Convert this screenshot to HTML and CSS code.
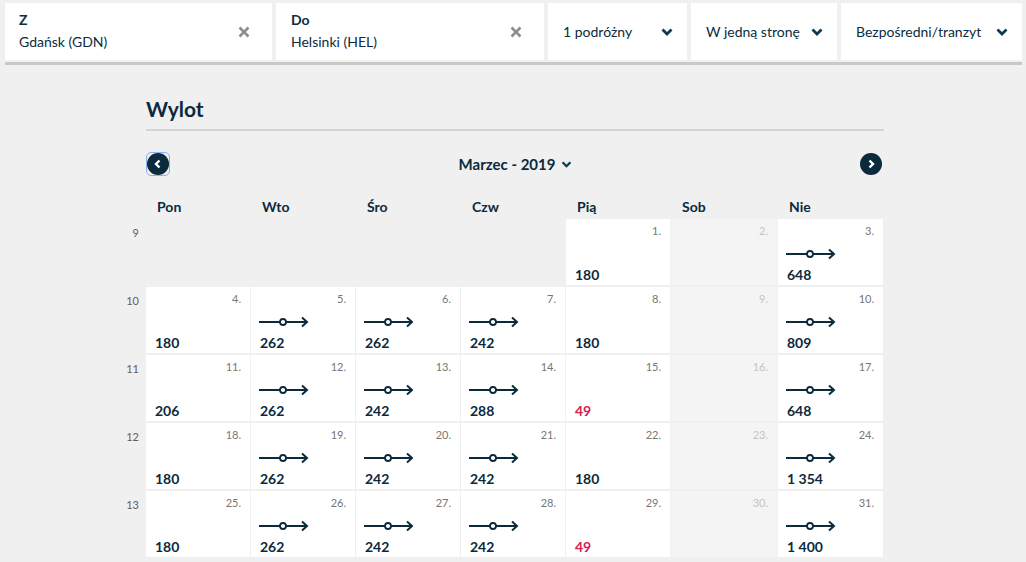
FILE: index.html
```html
<!DOCTYPE html>
<html lang="pl">
<head>
  <meta charset="UTF-8">
  <title>Wylot - kalendarz</title>
  <link rel="stylesheet" href="styles.css">
</head>
<body>
  <div class="search">
    <div class="field field-from">
      <div class="field-text">
        <div class="field-label">Z</div>
        <div class="field-value">Gdańsk (GDN)</div>
      </div>
      <svg class="clear" width="12" height="12" viewBox="0 0 12 12"><path d="M1.5 1.5 L10.5 10.5 M10.5 1.5 L1.5 10.5" stroke="#8e8e8e" stroke-width="2.6"/></svg>
    </div>
    <div class="field field-to">
      <div class="field-text">
        <div class="field-label">Do</div>
        <div class="field-value">Helsinki (HEL)</div>
      </div>
      <svg class="clear" width="12" height="12" viewBox="0 0 12 12"><path d="M1.5 1.5 L10.5 10.5 M10.5 1.5 L1.5 10.5" stroke="#8e8e8e" stroke-width="2.6"/></svg>
    </div>
    <div class="field field-pax">
      <span>1 podróżny</span>
      <svg class="chev" width="12" height="8" viewBox="0 0 12 8"><path d="M1.5 1.5 L6 6 L10.5 1.5" fill="none" stroke="#0b3a52" stroke-width="2.8"/></svg>
    </div>
    <div class="field field-trip">
      <span>W jedną stronę</span>
      <svg class="chev" width="12" height="8" viewBox="0 0 12 8"><path d="M1.5 1.5 L6 6 L10.5 1.5" fill="none" stroke="#0b3a52" stroke-width="2.8"/></svg>
    </div>
    <div class="field field-stops">
      <span>Bezpośredni/tranzyt</span>
      <svg class="chev" width="12" height="8" viewBox="0 0 12 8"><path d="M1.5 1.5 L6 6 L10.5 1.5" fill="none" stroke="#0b3a52" stroke-width="2.8"/></svg>
    </div>
  </div>

  <div class="calendar">
    <h2>Wylot</h2>
    <div class="nav">
      <button class="nav-btn focused"><svg width="22" height="22" viewBox="0 0 22 22"><circle cx="11" cy="11" r="11" fill="#0b2a3c"/><path d="M12.5 7.5 L9 11 L12.5 14.5" fill="none" stroke="#fff" stroke-width="2.4"/></svg></button>
      <div class="month-title">Marzec - 2019 <svg width="11" height="7" viewBox="0 0 12 8"><path d="M1.5 1.5 L6 6 L10.5 1.5" fill="none" stroke="#0b3a52" stroke-width="2.6"/></svg></div>
      <button class="nav-btn"><svg width="22" height="22" viewBox="0 0 22 22"><circle cx="11" cy="11" r="11" fill="#0b2a3c"/><path d="M9.5 7.5 L13 11 L9.5 14.5" fill="none" stroke="#fff" stroke-width="2.4"/></svg></button>
    </div>

    <div class="month">
      <div class="wk"></div>
      <div class="dow">Pon</div><div class="dow">Wto</div><div class="dow">Śro</div><div class="dow">Czw</div><div class="dow">Pią</div><div class="dow">Sob</div><div class="dow">Nie</div>

      <div class="wk">9</div>
      <div class="blank"></div><div class="blank"></div><div class="blank"></div><div class="blank"></div>
      <div class="day"><span class="num">1.</span><span class="price">180</span></div>
      <div class="day off"><span class="num">2.</span></div>
      <div class="day"><span class="num">3.</span><svg class="route" width="52" height="12" viewBox="0 0 52 12"><path d="M0 6 H21 M27 6 H48 M43 1.5 L48 6 L43 10.5" fill="none" stroke="#0b2a3c" stroke-width="2"/><circle cx="24" cy="6" r="3" fill="#fff" stroke="#0b2a3c" stroke-width="1.8"/></svg><span class="price">648</span></div>

      <div class="wk">10</div>
      <div class="day"><span class="num">4.</span><span class="price">180</span></div>
      <div class="day"><span class="num">5.</span><svg class="route" width="52" height="12" viewBox="0 0 52 12"><path d="M0 6 H21 M27 6 H48 M43 1.5 L48 6 L43 10.5" fill="none" stroke="#0b2a3c" stroke-width="2"/><circle cx="24" cy="6" r="3" fill="#fff" stroke="#0b2a3c" stroke-width="1.8"/></svg><span class="price">262</span></div>
      <div class="day"><span class="num">6.</span><svg class="route" width="52" height="12" viewBox="0 0 52 12"><path d="M0 6 H21 M27 6 H48 M43 1.5 L48 6 L43 10.5" fill="none" stroke="#0b2a3c" stroke-width="2"/><circle cx="24" cy="6" r="3" fill="#fff" stroke="#0b2a3c" stroke-width="1.8"/></svg><span class="price">262</span></div>
      <div class="day"><span class="num">7.</span><svg class="route" width="52" height="12" viewBox="0 0 52 12"><path d="M0 6 H21 M27 6 H48 M43 1.5 L48 6 L43 10.5" fill="none" stroke="#0b2a3c" stroke-width="2"/><circle cx="24" cy="6" r="3" fill="#fff" stroke="#0b2a3c" stroke-width="1.8"/></svg><span class="price">242</span></div>
      <div class="day"><span class="num">8.</span><span class="price">180</span></div>
      <div class="day off"><span class="num">9.</span></div>
      <div class="day"><span class="num">10.</span><svg class="route" width="52" height="12" viewBox="0 0 52 12"><path d="M0 6 H21 M27 6 H48 M43 1.5 L48 6 L43 10.5" fill="none" stroke="#0b2a3c" stroke-width="2"/><circle cx="24" cy="6" r="3" fill="#fff" stroke="#0b2a3c" stroke-width="1.8"/></svg><span class="price">809</span></div>

      <div class="wk">11</div>
      <div class="day"><span class="num">11.</span><span class="price">206</span></div>
      <div class="day"><span class="num">12.</span><svg class="route" width="52" height="12" viewBox="0 0 52 12"><path d="M0 6 H21 M27 6 H48 M43 1.5 L48 6 L43 10.5" fill="none" stroke="#0b2a3c" stroke-width="2"/><circle cx="24" cy="6" r="3" fill="#fff" stroke="#0b2a3c" stroke-width="1.8"/></svg><span class="price">262</span></div>
      <div class="day"><span class="num">13.</span><svg class="route" width="52" height="12" viewBox="0 0 52 12"><path d="M0 6 H21 M27 6 H48 M43 1.5 L48 6 L43 10.5" fill="none" stroke="#0b2a3c" stroke-width="2"/><circle cx="24" cy="6" r="3" fill="#fff" stroke="#0b2a3c" stroke-width="1.8"/></svg><span class="price">242</span></div>
      <div class="day"><span class="num">14.</span><svg class="route" width="52" height="12" viewBox="0 0 52 12"><path d="M0 6 H21 M27 6 H48 M43 1.5 L48 6 L43 10.5" fill="none" stroke="#0b2a3c" stroke-width="2"/><circle cx="24" cy="6" r="3" fill="#fff" stroke="#0b2a3c" stroke-width="1.8"/></svg><span class="price">288</span></div>
      <div class="day"><span class="num">15.</span><span class="price cheap">49</span></div>
      <div class="day off"><span class="num">16.</span></div>
      <div class="day"><span class="num">17.</span><svg class="route" width="52" height="12" viewBox="0 0 52 12"><path d="M0 6 H21 M27 6 H48 M43 1.5 L48 6 L43 10.5" fill="none" stroke="#0b2a3c" stroke-width="2"/><circle cx="24" cy="6" r="3" fill="#fff" stroke="#0b2a3c" stroke-width="1.8"/></svg><span class="price">648</span></div>

      <div class="wk">12</div>
      <div class="day"><span class="num">18.</span><span class="price">180</span></div>
      <div class="day"><span class="num">19.</span><svg class="route" width="52" height="12" viewBox="0 0 52 12"><path d="M0 6 H21 M27 6 H48 M43 1.5 L48 6 L43 10.5" fill="none" stroke="#0b2a3c" stroke-width="2"/><circle cx="24" cy="6" r="3" fill="#fff" stroke="#0b2a3c" stroke-width="1.8"/></svg><span class="price">262</span></div>
      <div class="day"><span class="num">20.</span><svg class="route" width="52" height="12" viewBox="0 0 52 12"><path d="M0 6 H21 M27 6 H48 M43 1.5 L48 6 L43 10.5" fill="none" stroke="#0b2a3c" stroke-width="2"/><circle cx="24" cy="6" r="3" fill="#fff" stroke="#0b2a3c" stroke-width="1.8"/></svg><span class="price">242</span></div>
      <div class="day"><span class="num">21.</span><svg class="route" width="52" height="12" viewBox="0 0 52 12"><path d="M0 6 H21 M27 6 H48 M43 1.5 L48 6 L43 10.5" fill="none" stroke="#0b2a3c" stroke-width="2"/><circle cx="24" cy="6" r="3" fill="#fff" stroke="#0b2a3c" stroke-width="1.8"/></svg><span class="price">242</span></div>
      <div class="day"><span class="num">22.</span><span class="price">180</span></div>
      <div class="day off"><span class="num">23.</span></div>
      <div class="day"><span class="num">24.</span><svg class="route" width="52" height="12" viewBox="0 0 52 12"><path d="M0 6 H21 M27 6 H48 M43 1.5 L48 6 L43 10.5" fill="none" stroke="#0b2a3c" stroke-width="2"/><circle cx="24" cy="6" r="3" fill="#fff" stroke="#0b2a3c" stroke-width="1.8"/></svg><span class="price">1 354</span></div>

      <div class="wk">13</div>
      <div class="day"><span class="num">25.</span><span class="price">180</span></div>
      <div class="day"><span class="num">26.</span><svg class="route" width="52" height="12" viewBox="0 0 52 12"><path d="M0 6 H21 M27 6 H48 M43 1.5 L48 6 L43 10.5" fill="none" stroke="#0b2a3c" stroke-width="2"/><circle cx="24" cy="6" r="3" fill="#fff" stroke="#0b2a3c" stroke-width="1.8"/></svg><span class="price">262</span></div>
      <div class="day"><span class="num">27.</span><svg class="route" width="52" height="12" viewBox="0 0 52 12"><path d="M0 6 H21 M27 6 H48 M43 1.5 L48 6 L43 10.5" fill="none" stroke="#0b2a3c" stroke-width="2"/><circle cx="24" cy="6" r="3" fill="#fff" stroke="#0b2a3c" stroke-width="1.8"/></svg><span class="price">242</span></div>
      <div class="day"><span class="num">28.</span><svg class="route" width="52" height="12" viewBox="0 0 52 12"><path d="M0 6 H21 M27 6 H48 M43 1.5 L48 6 L43 10.5" fill="none" stroke="#0b2a3c" stroke-width="2"/><circle cx="24" cy="6" r="3" fill="#fff" stroke="#0b2a3c" stroke-width="1.8"/></svg><span class="price">242</span></div>
      <div class="day"><span class="num">29.</span><span class="price cheap">49</span></div>
      <div class="day off"><span class="num">30.</span></div>
      <div class="day"><span class="num">31.</span><svg class="route" width="52" height="12" viewBox="0 0 52 12"><path d="M0 6 H21 M27 6 H48 M43 1.5 L48 6 L43 10.5" fill="none" stroke="#0b2a3c" stroke-width="2"/><circle cx="24" cy="6" r="3" fill="#fff" stroke="#0b2a3c" stroke-width="1.8"/></svg><span class="price">1 400</span></div>
    </div>
  </div>
</body>
</html>
```
FILE: styles.css
```css
body { margin: 0; background: #f0f0f0; font-family: Lato, "Noto Sans", sans-serif; color: #0b2a3c; overflow: hidden; }

/* search bar */
.search { display: flex; gap: 4px; margin: 3px 4px 0 5px; padding-bottom: 2px; border-bottom: 3px solid #c8c8c8; }
.field { background: #fff; height: 57px; box-sizing: border-box; display: flex; align-items: center; font-size: 14px; color: #0d2c40; }
.field-from { width: 267px; padding: 0 22px 0 14px; }
.field-to { width: 268px; padding: 0 22px 0 15px; }
.field-pax { width: 139px; padding: 0 14px 0 15px; }
.field-trip { width: 146px; padding: 0 14px 0 15px; }
.field-stops { flex: 1; padding: 0 14px 0 15px; }
.field-text { flex: 1; }
.field-label { font-weight: bold; font-size: 14px; line-height: 18px; }
.field-value { line-height: 20px; margin-top: 3px; }
.field > span:first-child { flex: 1; }

/* calendar */
.calendar { width: 738px; margin-left: 146px; }
.calendar h2 { margin: 0; padding-top: 30px; font-size: 21px; line-height: 28px; height: 34px; border-bottom: 2px solid #d4d4d4; }
.nav { display: flex; align-items: center; justify-content: space-between; margin-top: 22px; height: 22px; }
.nav-btn { border: 0; padding: 0; background: none; width: 22px; height: 22px; display: block; }
.nav-btn svg { display: block; }
.nav-btn.focused { outline: 1px solid #8ab0f0; outline-offset: 0; border-radius: 4px; margin-left: 1px; }
.nav-btn:last-child { margin-right: 2px; }
.month-title { font-weight: bold; font-size: 15px; display: flex; align-items: center; gap: 6px; margin-left: 2px; }

.month { display: grid; grid-template-columns: 26px 104px 104px 104px 104px 104px 106px 105px; column-gap: 1px; row-gap: 2px; margin-left: -27px; margin-top: 22px; grid-template-rows: 20px repeat(5, 66px); }
.dow { font-size: 14px; font-weight: bold; padding-left: 11px; padding-top: 2px; line-height: 16px; }
.wk { font-size: 11px; color: #6b5a50; text-align: right; padding-right: 6px; padding-top: 7px; }
.day { background: #fff; position: relative; }
.day.off { background: #f4f4f4; }
.num { position: absolute; top: 5px; right: 9px; font-size: 11px; color: #777; }
.off .num { color: #c4c4c4; }
.route { position: absolute; left: 8px; top: 29px; }
.price { position: absolute; left: 9px; bottom: 2px; font-size: 14px; font-weight: bold; }
.price.cheap { color: #d8204a; }
```
